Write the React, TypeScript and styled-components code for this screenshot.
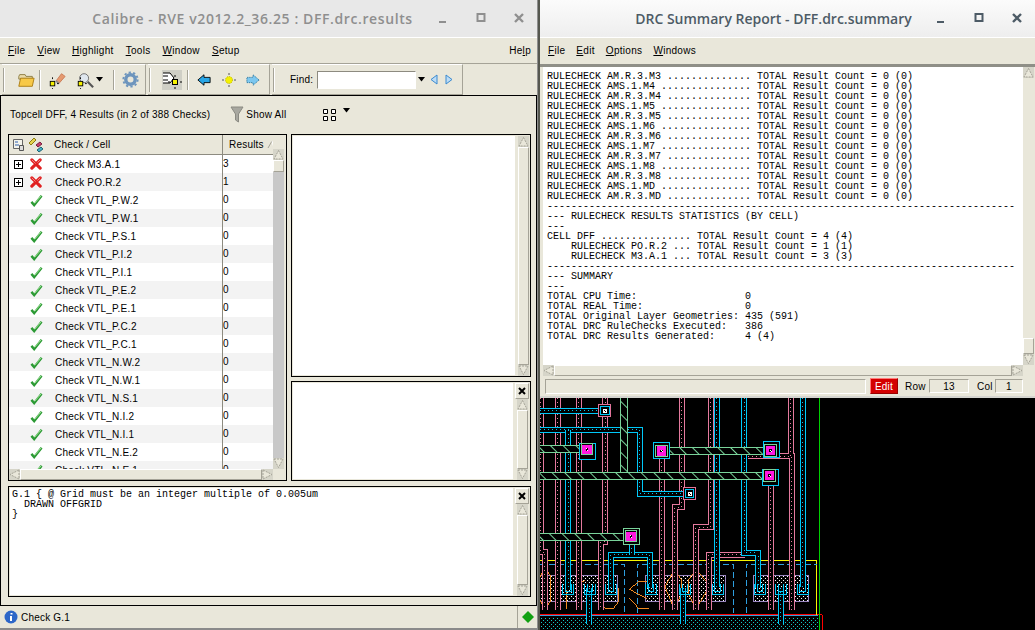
import React from "react";
import styled, { createGlobalStyle } from "styled-components";

const Global = createGlobalStyle`
  html, body { margin: 0; padding: 0; background: #000; }
  * { box-sizing: border-box; }
  #root { width: 1035px; height: 630px; overflow: hidden; }
`;

const UI = `"Liberation Sans", Arial, sans-serif`;
const PANEL = "#e9e7da";

const Desktop = styled.div`
  display: flex;
  width: 1035px;
  height: 630px;
  background: #000;
  font-family: ${UI};
  font-size: 10px;
  letter-spacing: 0.2px;
  color: #000;
`;
const LeftWindow = styled.div`
  width: 538px;
  height: 630px;
  display: flex;
  flex-direction: column;
  background: ${PANEL};
  border-right: 1px solid #8f8f8f;
  border-bottom: 2px solid #8a8a8a;
`;
const RightColumn = styled.div`
  flex: 1;
  min-width: 0;
  display: flex;
  flex-direction: column;
  border-left: 2px solid #55574f;
`;
const RightWindow = styled.div`
  height: 398px;
  display: flex;
  flex-direction: column;
  background: ${PANEL};
  border-bottom: 2px solid #d5d5d0;
`;
const TitleBar = styled.div<{ $active?: boolean }>`
  position: relative;
  flex: 0 0 38px;
  display: flex;
  align-items: center;
  justify-content: center;
  padding-right: ${(p) => (p.$active ? "28px" : "32px")};
  font-family: "Open Sans", sans-serif;
  font-weight: 600;
  font-size: 14px;
  letter-spacing: ${(p) => (p.$active ? "0" : "0.6px")};
  color: ${(p) => (p.$active ? "#4d5b66" : "#8f8f8f")};
  background: ${(p) => (p.$active ? "linear-gradient(#fbfbfb,#eeeeee)" : "#e8e8e8")};
  border-bottom: 1px solid #fff;
`;
const WindowButtons = styled.div<{ $active?: boolean }>`
  position: absolute;
  right: 11px;
  top: 11px;
  display: flex;
  gap: 24px;
  color: ${(p) => (p.$active ? "#4d5b66" : "#8f8f8f")};
`;
const MenuBar = styled.div`
  flex: 0 0 26px;
  display: flex;
  align-items: center;
  gap: 12px;
  padding: 0 6px 0 8px;
  font-size: 10px;
  letter-spacing: 0.3px;
  background: ${PANEL};
  border-bottom: 1px solid #a5a397;
  u { text-decoration: underline; text-underline-offset: 1px; }
`;
const MenuSpacer = styled.div`flex: 1;`;
const Toolbar = styled.div`
  flex: 0 0 31px;
  display: flex;
  gap: 2px;
  padding-left: 2px;
  background: ${PANEL};
`;
const ToolGroup = styled.div<{ $w: number }>`
  width: ${(p) => p.$w}px;
  display: flex;
  align-items: center;
  border-right: 1px solid #a5a397;
  border-bottom: 1px solid #a5a397;
  border-top: 1px solid #fff;
  padding-left: 1px;
`;
const Grip = styled.div`
  flex: none;
  width: 2px;
  height: 24px;
  border-left: 1px solid #a5a397;
  border-right: 1px solid #fff;
`;
const ToolSep = styled.div<{ $ml: number }>`
  flex: none;
  width: 2px;
  height: 20px;
  border-left: 1px solid #a5a397;
  border-right: 1px solid #fff;
  margin-left: ${(p) => p.$ml}px;
`;
const ToolIcon = styled.svg<{ $ml?: number }>`
  display: block;
  flex: none;
  margin-left: ${(p) => p.$ml ?? 0}px;
`;
const FindLabel = styled.span`
  margin-left: 15px;
  width: 27px;
`;
const FindInput = styled.div`
  width: 99px;
  height: 18px;
  background: #fff;
  border: 1px solid;
  border-color: #8d8b80 #fff #fff #8d8b80;
`;
const Content = styled.div`
  flex: 1;
  min-height: 0;
  display: flex;
  flex-direction: column;
  border: 1px solid #000;
  padding: 0 5px 8px 7px;
`;
const SummaryRow = styled.div`
  flex: 0 0 38px;
  display: flex;
  align-items: center;
  padding: 0 0 2px 2px;
`;
const ShowAll = styled.div`
  display: flex;
  align-items: center;
  gap: 2px;
  margin-left: 20px;
`;
const LayoutToggle = styled.div`
  display: flex;
  align-items: flex-start;
  gap: 6px;
  margin-left: 36px;
  padding-top: 2px;
`;
const UpperGrid = styled.div`
  flex: 0 0 347px;
  min-height: 0;
  display: grid;
  grid-template-columns: 279px 240px;
  grid-template-rows: 347px;
  column-gap: 4px;
`;
const SideStack = styled.div`
  display: grid;
  min-height: 0;
  grid-template-rows: 243px 100px;
  row-gap: 4px;
`;
const Pane = styled.div`
  display: flex;
  min-height: 0;
  background: ${PANEL};
  border: 1px solid #000;
`;
const TablePane = styled.div`
  display: grid;
  grid-template-columns: minmax(0, 1fr) 13px;
  grid-template-rows: minmax(0, 1fr) 11px;
  min-height: 0;
  background: ${PANEL};
  border: 1px solid #000;
`;
const PaneWhite = styled.div`
  flex: 1;
  min-width: 0;
  background: #fff;
  margin: 1px;
`;
const SideRail = styled.div`
  flex: 0 0 14px;
  display: flex;
  flex-direction: column;
  align-items: center;
  padding: 1px 1px 0 1px;
`;
const CloseButton = styled.div`
  flex: 0 0 16px;
  width: 14px;
  display: flex;
  align-items: center;
  justify-content: center;
  background: ${PANEL};
  border: 1px solid;
  border-color: #fff #a5a397 #a5a397 #fff;
`;
const ScrollV = styled.div<{ $offset?: number }>`
  flex: 1;
  min-height: 0;
  display: flex;
  flex-direction: column;
  width: 11px;
  margin-top: ${(p) => p.$offset ?? 0}px;
`;
const ArrowCell = styled.div`
  flex: none;
  display: flex;
  align-items: center;
  justify-content: center;
  background: #d6d5c9;
`;
const Track = styled.div<{ $grey?: boolean; $plain?: boolean }>`
  flex: 1;
  min-height: 0;
  min-width: 0;
  display: flex;
  flex-direction: column;
  justify-content: ${(p) => (p.$plain ? "flex-end" : "flex-start")};
  background: ${(p) => (p.$grey ? "#c8c8c8" : PANEL)};
  border: ${(p) => (p.$grey || p.$plain ? "0" : "1px solid")};
  border-color: #fff #a5a397 #a5a397 #fff;
`;
const Thumb = styled.div<{ $h?: number }>`
  height: ${(p) => p.$h ?? 12}px;
  background: ${PANEL};
  border: 1px solid;
  border-color: #fff #a5a397 #a5a397 #fff;
`;
const ScrollH = styled.div`
  display: flex;
  min-width: 0;
  height: 11px;
`;
const Tree = styled.div`
  min-width: 0;
  min-height: 0;
  overflow: hidden;
  display: flex;
  flex-direction: column;
`;
const TreeHeader = styled.div`
  flex: 0 0 20px;
  display: grid;
  grid-template-columns: 213px 1fr;
  background: ${PANEL};
  border-bottom: 1px solid #8d8b80;
`;
const HeadCell = styled.div<{ $divider?: boolean }>`
  display: flex;
  align-items: center;
  padding-left: ${(p) => (p.$divider ? "6px" : "3px")};
  border-left: ${(p) => (p.$divider ? "1px solid #8d8b80" : "0")};
  gap: 3px;
`;
const HeadTitle = styled.span`
  margin-left: 6px;
`;
const TreeBody = styled.div`
  flex: 1;
  min-height: 0;
  overflow: hidden;
`;
const TreeRow = styled.div<{ $alt: boolean }>`
  height: 18px;
  display: grid;
  grid-template-columns: 213px 1fr;
  background: ${(p) => (p.$alt ? "#f3f3f3" : "#fff")};
`;
const NameCell = styled.div`
  display: flex;
  align-items: center;
  white-space: nowrap;
`;
const ExpanderSlot = styled.div`
  flex: 0 0 19px;
  display: flex;
  justify-content: center;
`;
const StatusSlot = styled.div`
  flex: 0 0 16px;
  display: flex;
  justify-content: center;
  margin-right: 11px;
`;
const ValueCell = styled.div`
  display: flex;
  align-items: center;
  border-left: 1px solid #8d8b80;
  line-height: 1;
`;
const Corner = styled.div`
  background: ${PANEL};
`;
const BottomPane = styled(Pane)`
  flex: 0 0 111px;
  margin-top: 5px;
`;
const CodeArea = styled.pre`
  flex: 1;
  min-width: 0;
  margin: 1px;
  padding: 2px 2px;
  background: #fff;
  font-family: "Liberation Mono", monospace;
  font-size: 10px;
  letter-spacing: 0;
  line-height: 10px;
  color: #000;
`;
const StatusBar = styled.div`
  flex: 0 0 22px;
  display: flex;
  align-items: center;
  padding-left: 4px;
  gap: 3px;
  background: ${PANEL};
`;
const StatusText = styled.div`flex: 1;`;
const StatusLed = styled.div`
  flex: 0 0 20px;
  align-self: stretch;
  display: flex;
  align-items: center;
  justify-content: center;
  border-left: 1px solid #a5a397;
`;
const RightMenu = styled(MenuBar)`
  padding: 0 0 1px 6px;
  gap: 11px;
  margin-left: 2px;
  border-bottom: 0;
`;
const ReportBody = styled.div`
  flex: 1;
  min-height: 0;
  display: grid;
  grid-template-columns: minmax(0, 1fr) 12px;
  grid-template-rows: minmax(0, 1fr) 12px;
  border-top: 3px solid #8f8f87;
  padding: 0 0 0 3px;
`;
const ReportText = styled.pre`
  margin: 0;
  padding: 5px 0 0 4px;
  background: #fff;
  overflow: hidden;
  font-family: "Liberation Mono", monospace;
  font-size: 10px;
  letter-spacing: 0;
  line-height: 10px;
  color: #000;
`;
const ReportStatus = styled.div`
  flex: 0 0 19px;
  display: flex;
  align-items: center;
  padding: 0 12px 1px 5px;
  font-size: 10px;
`;
const StatusWell = styled.div`
  flex: 1;
  height: 15px;
  border: 1px solid;
  border-color: #a5a397 #fff #fff #a5a397;
  margin-right: 4px;
`;
const EditBadge = styled.div`
  width: 28px;
  height: 16px;
  display: flex;
  align-items: center;
  justify-content: center;
  background: #d40000;
  color: #fff;
  border: 1px solid;
  border-color: #ff7a7a #900 #900 #ff7a7a;
  margin-right: 7px;
`;
const FieldLabel = styled.span<{ $w: number }>`
  width: ${(p) => p.$w}px;
`;
const NumberField = styled.div<{ $w: number; $gap?: number }>`
  width: ${(p) => p.$w}px;
  height: 14px;
  display: flex;
  align-items: center;
  justify-content: center;
  border: 1px solid;
  border-color: #a5a397 #fff #fff #a5a397;
  margin-right: ${(p) => p.$gap ?? 0}px;
`;
const Canvas = styled.div`
  flex: 1;
  min-height: 0;
  background: #000;
  svg { display: block; }
`;

const Triangle = ({ dir }: { dir: "up" | "down" | "left" | "right" }) => {
  const pts = {
    up: "5.5,1.5 10,10 1,10",
    down: "1,1 10,1 5.5,9.5",
    left: "10,1 10,10 1,5.5",
    right: "1,1 1,10 10,5.5",
  }[dir];
  return (
    <svg width="11" height="11" viewBox="0 0 11 11" style={{ display: "block" }}>
      <polygon points={pts} fill="#e9e7da" stroke="#a5a397" strokeDasharray="2 1" />
    </svg>
  );
};

const VScroll = ({ offset, grey }: { offset?: number; grey?: boolean }) => (
  <ScrollV $offset={offset}>
    <ArrowCell><Triangle dir="up" /></ArrowCell>
    {grey ? <Track $grey><Thumb /></Track> : <Track />}
    <ArrowCell><Triangle dir="down" /></ArrowCell>
  </ScrollV>
);

const Cross = () => (
  <svg width="12" height="12" viewBox="0 0 13 13">
    <path d="M2 2L11 11M11 2L2 11" stroke="#e02020" strokeWidth="3.4" strokeLinecap="round" />
    <path d="M2 2L6 6M11 2L8 5" stroke="#f58a8a" strokeWidth="1" />
  </svg>
);
const Check = () => (
  <svg width="13" height="13" viewBox="0 0 14 13">
    <path d="M1.5 8L4.5 11.5L12.5 1.5" fill="none" stroke="#2c9a35" strokeWidth="2.6" />
    <path d="M5 9.5L12 1.5" fill="none" stroke="#a6e89c" strokeWidth="1" />
  </svg>
);
const Expander = () => (
  <svg width="9" height="9" viewBox="0 0 9 9">
    <rect x=".5" y=".5" width="8" height="8" fill="#fff" stroke="#000" />
    <path d="M2 4.5H7M4.5 2V7" stroke="#000" />
  </svg>
);
const CloseX = () => (
  <svg width="8" height="8" viewBox="0 0 8 8">
    <path d="M1 1L7 7M7 1L1 7" stroke="#000" strokeWidth="2" />
  </svg>
);
const WinMin = () => (
  <svg width="14" height="14" viewBox="0 0 14 14"><rect x="3" y="10" width="7" height="2" fill="currentColor" /></svg>
);
const WinMax = () => (
  <svg width="14" height="14" viewBox="0 0 14 14"><rect x="3.5" y="3" width="7" height="7" fill="none" stroke="currentColor" strokeWidth="2" /></svg>
);
const WinClose = () => (
  <svg width="14" height="14" viewBox="0 0 14 14"><path d="M3 3L11 11M11 3L3 11" stroke="currentColor" strokeWidth="2.4" /></svg>
);

const YellowDot = ({ x, y, s = 6 }: { x: number; y: number; s?: number }) => (
  <g>
    <path d={`M${x - s + 1} ${y}h-2M${x + s + 1} ${y}h-2M${x} ${y - s + 1}v-2M${x} ${y + s + 1}v-2`} stroke="#000" />
    <rect x={x - 2.5} y={y - 2.5} width="5" height="5" fill="#f5f000" stroke="#000" />
  </g>
);

const FolderIcon = ({ ml }: { ml: number }) => (
  <ToolIcon $ml={ml} width="18" height="18" viewBox="0 0 20 20">
    <path d="M2 6l1-2h6l1 2h7v3H2z" fill="#e8d9a8" stroke="#8a7a40" />
    <path d="M2 17L4 8h15l-2 9z" fill="#f7c948" stroke="#a97b10" />
  </ToolIcon>
);
const HighlightIcon = ({ ml }: { ml: number }) => (
  <ToolIcon $ml={ml} width="18" height="18" viewBox="0 0 20 20">
    <path d="M9 11L15 3l4 3-7 8z" fill="#e59a70" stroke="#c97a55" />
    <path d="M9 11l3 3" stroke="#888" strokeWidth="2" />
    <YellowDot x={5} y={14} />
  </ToolIcon>
);
const ZoomIcon = ({ ml }: { ml: number }) => (
  <ToolIcon $ml={ml} width="18" height="18" viewBox="0 0 20 20">
    <circle cx="9" cy="8" r="5" fill="#dfe7ee" stroke="#666" />
    <path d="M13 12l6 6" stroke="#555" strokeWidth="2.4" />
    <YellowDot x={5} y={14} />
  </ToolIcon>
);
const GearIcon = ({ ml }: { ml: number }) => (
  <ToolIcon $ml={ml} width="17" height="17" viewBox="0 0 18 18">
    <circle cx="9" cy="9" r="5" fill="none" stroke="#6d95bd" strokeWidth="3.6" />
    <circle cx="9" cy="9" r="7.6" fill="none" stroke="#6d95bd" strokeWidth="2" strokeDasharray="2.4 2.4" />
  </ToolIcon>
);
const ProbeIcon = ({ ml }: { ml: number }) => (
  <ToolIcon $ml={ml} width="20" height="20" viewBox="0 0 20 20">
    <rect x="0" y="0" width="20" height="20" fill="#cfcfc6" />
    <path d="M1 3h7l4 5-4 5H1" fill="#fff" stroke="#000" />
    <path d="M1 6h5M1 10h5" stroke="#000" />
    <YellowDot x={13} y={12} />
  </ToolIcon>
);
const BackIcon = ({ ml }: { ml: number }) => (
  <ToolIcon $ml={ml} width="16" height="14" viewBox="0 0 16 16">
    <path d="M1 8l7-6v3h7v6H8v3z" fill="#29a6e6" stroke="#000" />
  </ToolIcon>
);
const CenterIcon = ({ ml }: { ml: number }) => (
  <ToolIcon $ml={ml} width="16" height="16" viewBox="0 0 16 16">
    <circle cx="8" cy="8" r="3.5" fill="#f4f000" stroke="#b9b400" strokeDasharray="1 1" />
    <path d="M1 8h2M13 8h2M8 1v2M8 13v2" stroke="#555" />
  </ToolIcon>
);
const ForwardIcon = ({ ml }: { ml: number }) => (
  <ToolIcon $ml={ml} width="16" height="14" viewBox="0 0 16 16">
    <path d="M15 8L8 2v3H1v6h7v3z" fill="#7cc7ef" stroke="#29739b" strokeDasharray="1.5 1" />
  </ToolIcon>
);
const Caret = ({ ml = 0 }: { ml?: number }) => (
  <ToolIcon $ml={ml} width="7" height="5" viewBox="0 0 7 5">
    <path d="M0 0h7L3.5 4.5z" fill="#000" />
  </ToolIcon>
);
const Funnel = () => (
  <svg width="14" height="17" viewBox="0 0 14 17"><path d="M1 1h12L8.5 8v8l-3-2V8z" fill="#a8a8a0" stroke="#8a8a82" /></svg>
);
const GridToggle = () => (
  <svg width="15" height="14" viewBox="0 0 15 14">
    <path d="M1.5 1.5h4v4h-4zM9.5 1.5h4v4h-4zM1.5 8.5h4v4h-4zM9.5 8.5h4v4h-4z" fill="#fff" stroke="#000" />
  </svg>
);
const ColIconA = () => (
  <svg width="13" height="14" viewBox="0 0 13 14">
    <path d="M1.5 1.5h9v9h-9z" fill="#f4f4ec" stroke="#666" />
    <path d="M3 4h3M3 7h4" stroke="#3060b0" />
    <path d="M7.5 7.5h4v5h-4z" fill="#ddd" stroke="#555" />
  </svg>
);
const ColIconB = () => (
  <svg width="17" height="16" viewBox="0 0 17 16">
    <path d="M1 6L6 1l2 2-5 5z" fill="#e5d450" stroke="#8b7c10" />
    <path d="M8 8l4-3 2 2-4 3z" fill="#c9406a" stroke="#7a2240" />
    <path d="M9 13l4-3 2 2-4 3z" fill="#43b1c6" stroke="#1f6474" />
  </svg>
);
const SortMark = () => (
  <svg width="8" height="9" viewBox="0 0 8 9"><path d="M1 8L5 1" stroke="#a5a397" /><path d="M5 1L7 8" stroke="#fff" /></svg>
);
const InfoIcon = () => (
  <svg width="14" height="14" viewBox="0 0 14 14">
    <circle cx="7" cy="7" r="6.5" fill="#2c66c8" />
    <path d="M7.5 3v1.5M7 6v5" stroke="#fff" strokeWidth="2" />
  </svg>
);
const Led = () => (
  <svg width="12" height="12" viewBox="0 0 12 12"><path d="M6 0l6 6-6 6-6-6z" fill="#11a011" /></svg>
);

const Wire = ({ d, color, w = 18 }: { d: string; color: string; w?: number }) => (
  <g fill="none" strokeLinejoin="miter">
    <path d={d} stroke={color} strokeWidth={w} />
    <path d={d} stroke="#000" strokeWidth={w - 6} />
    <path d={d} stroke={color} strokeWidth="3" strokeDasharray="3 9" />
  </g>
);
const Strap = ({ d }: { d: string }) => (
  <g fill="none">
    <path d={d} stroke="#79d39a" strokeWidth="24" />
    <path d={d} stroke="#000" strokeWidth="18" />
    <path d={d} stroke="url(#hatch)" strokeWidth="18" />
  </g>
);
const Via = ({ x, y, bx, by, box }: { x: number; y: number; bx: number; by: number; box: string }) => (
  <g>
    <rect x={bx - 24} y={by - 24} width="48" height="48" fill="#000" stroke={box} strokeWidth="3" />
    <rect x={x - 17} y={y - 17} width="34" height="34" fill="#000" stroke="#79d39a" strokeWidth="3" />
    <rect x={x - 14} y={y - 14} width="28" height="28" fill="#ff19e0" />
    <rect x={x - 4} y={y - 4} width="8" height="8" fill="#000" />
    <rect x={x - 3} y={y - 3} width="3" height="3" fill="#fff" />
    <rect x={x + 1} y={y + 1} width="3" height="3" fill="#fff" />
  </g>
);
const SmallVia = ({ x, y }: { x: number; y: number }) => (
  <g>
    <rect x={x - 18} y={y - 18} width="36" height="36" fill="#000" stroke="#e2749a" strokeWidth="3" />
    <rect x={x - 13} y={y - 12} width="26" height="24" fill="#000" stroke="#00c8f8" strokeWidth="3" />
    <rect x={x - 6} y={y - 6} width="12" height="12" fill="#fff" />
    <rect x={x - 3} y={y - 3} width="3" height="3" fill="#000" />
    <rect x={x + 1} y={y + 1} width="3" height="3" fill="#000" />
  </g>
);
const Contact = ({ x, y }: { x: number; y: number }) => (
  <path d={`M${x - 16} ${y - 16}v33h33v-33M${x - 8} ${y - 16}v25h17v-25`} fill="none" stroke="#00c8f8" strokeWidth="3" />
);

const PINK = "#e57a9e";
const BLUE = "#00c8f8";

const LayoutArt = () => (
  <svg width="495" height="232" viewBox="540 398 495 232" shapeRendering="crispEdges">
    <defs>
      <pattern id="dots" width="12" height="12" patternUnits="userSpaceOnUse">
        <rect width="3" height="3" fill="#fff" />
        <rect x="6" y="6" width="3" height="3" fill="#fff" />
      </pattern>
      <pattern id="tealdots" width="12" height="12" patternUnits="userSpaceOnUse">
        <rect width="12" height="12" fill="#000" />
        <rect width="3" height="3" fill="#12c6c6" />
        <rect x="6" y="6" width="3" height="3" fill="#12c6c6" />
      </pattern>
      <pattern id="hatch" width="27" height="27" patternUnits="userSpaceOnUse" patternTransform="rotate(-45)">
        <rect width="3" height="27" fill="#79d39a" />
      </pattern>
    </defs>
    <g transform="translate(535 380) scale(0.33333)">
      <rect x="15" y="710" width="838" height="40" fill="url(#tealdots)" />
      <path d="M15 705H862V750" fill="none" stroke="#ff0000" strokeWidth="3" />
      <path d="M15 708H850" fill="none" stroke="#39a0e0" strokeWidth="3" />

      {[
        [15, 588, 233, 77],
        [332, 588, 240, 77],
        [656, 588, 164, 77],
      ].map(([x, y, w, h]) => (
        <g key={x}>
          <rect x={x} y={y} width={w} height={h} fill="url(#dots)" />
          <rect x={x} y={y} width={w} height={h} fill="none" stroke="#9a86c0" strokeWidth="3" />
        </g>
      ))}

      <path d="M15 541H845V705" fill="none" stroke="#f8f800" strokeWidth="3" />
      <path d="M15 553H268V700M307 700V553H595V700M634 700V553H845" fill="none" stroke="#2e9fe0" strokeWidth="3" strokeDasharray="18 9" />

      <g fill="none" stroke="#f08a20" strokeWidth="3">
        <path d="M30 563L15 590V660L30 688L48 660V590Z" />
        <path d="M95 610V688M125 620L150 600" />
        <path d="M190 610V665L212 686H235L250 665V625" />
        <path d="M283 628L312 604H335M283 655L312 686H342M283 628L335 655" />
        <path d="M418 570L390 620L418 688L440 640V600Z" />
        <path d="M483 570L525 615L483 688L460 640V600Z" />
      </g>

      <Wire d="M18 55V517H30V690" color={PINK} />
      <Wire d="M68 55V690" color={PINK} />
      <Wire d="M132 55V690" color={PINK} />
      <Wire d="M211 55V485H197V690" color={PINK} />
      <Wire d="M380 235V690" color={PINK} />
      <Wire d="M440 55V382H420V690" color={PINK} />
      <Wire d="M527 55V442H483V690" color={PINK} />
      <Wire d="M630 525H522V690" color={PINK} />
      <Wire d="M708 300V690" color={PINK} />
      <Wire d="M640 229H770V690M767 229V55" color={PINK} />

      <Wire d="M15 92H205" color={BLUE} />
      <Wire d="M15 150H315V342H462" color={BLUE} />
      <Wire d="M100 150V630" color={BLUE} />
      <Wire d="M545 55V622" color={BLUE} />
      <Wire d="M628 55V518H670V625" color={BLUE} />
      <Wire d="M803 55V622" color={BLUE} />
      <Wire d="M163 625V732" color={BLUE} />
      <Wire d="M445 625V732" color={BLUE} />
      <Wire d="M738 625V732" color={BLUE} />
      <Wire d="M228 625V525H345V625" color={BLUE} />
      <Wire d="M290 480V525" color={BLUE} />

      <Strap d="M268 55V298" />
      <Strap d="M15 208H150" />
      <Strap d="M15 287H700" />
      <Strap d="M385 214H705" />
      <Strap d="M15 470H285" />

      <SmallVia x={210} y={92} />
      <SmallVia x={464} y={341} />
      <Via x={156} y={208} bx={157} by={216} box={BLUE} />
      <Via x={380} y={213} bx={380} by={212} box={BLUE} />
      <Via x={707} y={212} bx={709} by={208} box={BLUE} />
      <Via x={704} y={287} bx={708} by={292} box={BLUE} />
      <Via x={288} y={469} bx={289} by={469} box="#79d39a" />

      {[100, 165, 228, 348, 450, 548, 675, 738, 803].map((x) => (
        <Contact key={x} x={x} y={627} />
      ))}

      <path d="M853 55V750" stroke="#00d000" strokeWidth="3" />
    </g>
  </svg>
);

const checks = [
  ["M3.A.1", "3", true], ["PO.R.2", "1", true],
  ...["P.W.2","P.W.1","P.S.1","P.I.2","P.I.1","P.E.2","P.E.1","P.C.2","P.C.1","N.W.2","N.W.1","N.S.1","N.I.2","N.I.1","N.E.2","N.E.1"]
    .map((s) => ["VTL_" + s, "0", false]),
] as [string, string, boolean][];

const rc = (name: string, n = 34) => `RULECHECK ${name} `.padEnd(n, ".") + " TOTAL Result Count = 0 (0)";
const reportLines = [
  ...["AM.R.3.M3","AMS.1.M4","AM.R.3.M4","AMS.1.M5","AM.R.3.M5","AMS.1.M6","AM.R.3.M6","AMS.1.M7","AM.R.3.M7","AMS.1.M8","AM.R.3.M8","AMS.1.MD","AM.R.3.MD"].map((n) => rc(n)),
  "-".repeat(78),
  "--- RULECHECK RESULTS STATISTICS (BY CELL)",
  "---",
  "CELL DFF ............... TOTAL Result Count = 4 (4)",
  "    RULECHECK PO.R.2 ... TOTAL Result Count = 1 (1)",
  "    RULECHECK M3.A.1 ... TOTAL Result Count = 3 (3)",
  "-".repeat(78),
  "--- SUMMARY",
  "---",
  "TOTAL CPU Time:                  0",
  "TOTAL REAL Time:                 0",
  "TOTAL Original Layer Geometries: 435 (591)",
  "TOTAL DRC RuleChecks Executed:   386",
  "TOTAL DRC Results Generated:     4 (4)",
];

export default function App() {
  return (
    <Desktop>
      <Global />
      <LeftWindow>
        <TitleBar>
          Calibre - RVE v2012.2_36.25 : DFF.drc.results
          <WindowButtons>
            <WinMin /><WinMax /><WinClose />
          </WindowButtons>
        </TitleBar>
        <MenuBar>
          <span><u>F</u>ile</span>
          <span><u>V</u>iew</span>
          <span><u>H</u>ighlight</span>
          <span><u>T</u>ools</span>
          <span><u>W</u>indow</span>
          <span><u>S</u>etup</span>
          <MenuSpacer />
          <span>He<u>l</u>p</span>
        </MenuBar>
        <Toolbar>
          <ToolGroup $w={144}>
            <Grip /><FolderIcon ml={12} /><ToolSep $ml={4} /><HighlightIcon ml={7} />
            <ZoomIcon ml={10} /><Caret ml={2} /><ToolSep $ml={10} /><GearIcon ml={7} />
          </ToolGroup>
          <ToolGroup $w={122}>
            <Grip /><ProbeIcon ml={11} /><ToolSep $ml={5} /><BackIcon ml={7} />
            <CenterIcon ml={9} /><ForwardIcon ml={8} />
          </ToolGroup>
          <ToolGroup $w={191}>
            <Grip />
            <FindLabel>Find:</FindLabel>
            <FindInput />
            <Caret ml={2} />
            <ToolIcon $ml={5} width="8" height="11" viewBox="0 0 8 11"><path d="M7 1L1 5.5 7 10z" fill="#bcdcf5" stroke="#3a8ad0" /></ToolIcon>
            <ToolIcon $ml={7} width="8" height="11" viewBox="0 0 8 11"><path d="M1 1l6 4.5L1 10z" fill="#bcdcf5" stroke="#3a8ad0" /></ToolIcon>
          </ToolGroup>
        </Toolbar>
        <Content>
          <SummaryRow>
            <span>Topcell DFF, 4 Results (in 2 of 388 Checks)</span>
            <ShowAll><Funnel /><span>Show All</span></ShowAll>
            <LayoutToggle><GridToggle /><Caret /></LayoutToggle>
          </SummaryRow>
          <UpperGrid>
            <TablePane>
              <Tree>
                <TreeHeader>
                  <HeadCell>
                    <ColIconA /><ColIconB /><HeadTitle>Check / Cell</HeadTitle>
                  </HeadCell>
                  <HeadCell $divider>Results <SortMark /></HeadCell>
                </TreeHeader>
                <TreeBody>
                  {checks.map(([name, val, bad], i) => (
                    <TreeRow key={name} $alt={i % 2 === 1}>
                      <NameCell>
                        <ExpanderSlot>{bad && <Expander />}</ExpanderSlot>
                        <StatusSlot>{bad ? <Cross /> : <Check />}</StatusSlot>
                        Check {name}
                      </NameCell>
                      <ValueCell>{val}</ValueCell>
                    </TreeRow>
                  ))}
                </TreeBody>
              </Tree>
              <VScroll offset={14} grey />
              <ScrollH>
                <ArrowCell><Triangle dir="left" /></ArrowCell>
                <Track />
                <ArrowCell><Triangle dir="right" /></ArrowCell>
              </ScrollH>
              <Corner />
            </TablePane>
            <SideStack>
              <Pane>
                <PaneWhite />
                <SideRail><VScroll /></SideRail>
              </Pane>
              <Pane>
                <PaneWhite />
                <SideRail>
                  <CloseButton><CloseX /></CloseButton>
                  <VScroll />
                </SideRail>
              </Pane>
            </SideStack>
          </UpperGrid>
          <BottomPane>
            <CodeArea>{"G.1 { @ Grid must be an integer multiple of 0.005um\n  DRAWN OFFGRID\n}"}</CodeArea>
            <SideRail>
              <CloseButton><CloseX /></CloseButton>
              <VScroll />
            </SideRail>
          </BottomPane>
        </Content>
        <StatusBar>
          <InfoIcon />
          <StatusText>Check G.1</StatusText>
          <StatusLed><Led /></StatusLed>
        </StatusBar>
      </LeftWindow>
      <RightColumn>
        <RightWindow>
          <TitleBar $active>
            DRC Summary Report - DFF.drc.summary
            <WindowButtons $active>
              <WinMin /><WinMax /><WinClose />
            </WindowButtons>
          </TitleBar>
          <RightMenu>
            <span><u>F</u>ile</span>
            <span><u>E</u>dit</span>
            <span><u>O</u>ptions</span>
            <span><u>W</u>indows</span>
          </RightMenu>
          <ReportBody>
            <ReportText>{reportLines.join("\n")}</ReportText>
            <ScrollV>
              <ArrowCell><Triangle dir="up" /></ArrowCell>
              <Track $plain><Thumb $h={16} /></Track>
              <ArrowCell><Triangle dir="down" /></ArrowCell>
            </ScrollV>
            <ScrollH>
              <ArrowCell><Triangle dir="left" /></ArrowCell>
              <Track />
              <ArrowCell><Triangle dir="right" /></ArrowCell>
            </ScrollH>
            <Corner />
          </ReportBody>
          <ReportStatus>
            <StatusWell />
            <EditBadge>Edit</EditBadge>
            <FieldLabel $w={24}>Row</FieldLabel>
            <NumberField $w={40} $gap={8}>13</NumberField>
            <FieldLabel $w={18}>Col</FieldLabel>
            <NumberField $w={28}>1</NumberField>
          </ReportStatus>
        </RightWindow>
        <Canvas><LayoutArt /></Canvas>
      </RightColumn>
    </Desktop>
  );
}
